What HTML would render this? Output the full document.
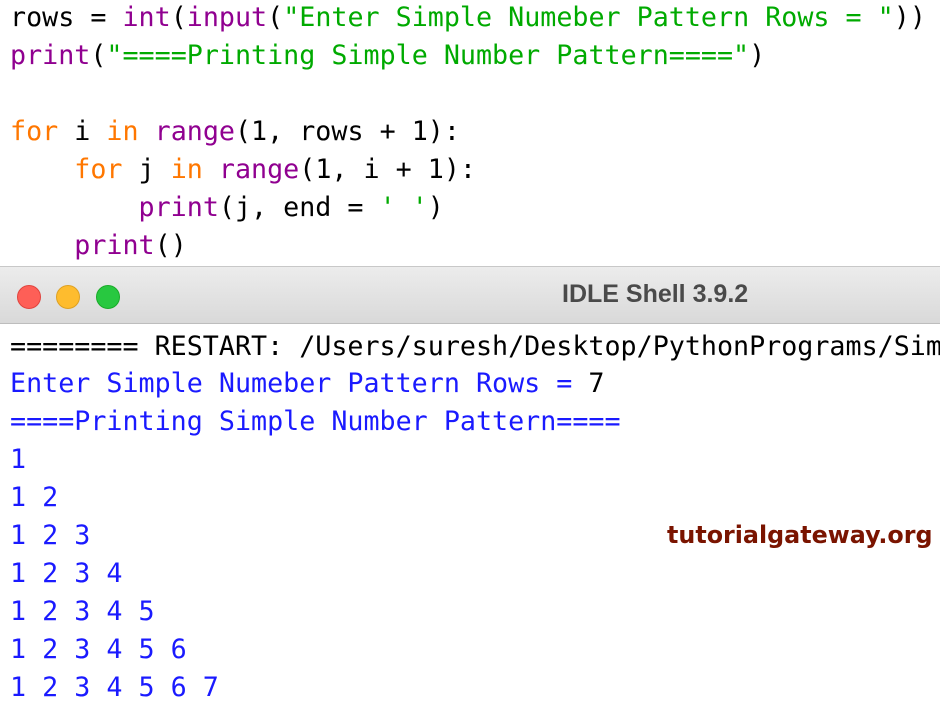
<!DOCTYPE html>
<html><head><meta charset="utf-8"><style>
body{margin:0;width:940px;height:707px;overflow:hidden;background:#fff;position:relative;font-family:"DejaVu Sans Mono","Liberation Mono",monospace;font-size:26.7px;}
.l{position:absolute;left:10px;white-space:pre;line-height:38px;height:38px;}
.k{color:#ff7700}.b{color:#900090}.s{color:#00aa00}.o{color:#1a1aff}
#bar{position:absolute;left:0;top:266px;width:940px;height:56px;background:linear-gradient(#ececec,#d9d9d9);border-top:1px solid #c8c8c8;border-bottom:1px solid #bdbdbd;}
.c{position:absolute;top:18px;width:22px;height:22px;border-radius:50%;}
#t{position:absolute;left:562px;top:13px;font-family:"Liberation Sans",sans-serif;font-weight:bold;font-size:25px;color:#4a4a4a;}
#w{position:absolute;left:667px;top:521px;font-family:"DejaVu Sans","Liberation Sans",sans-serif;font-weight:bold;font-size:23.8px;color:#7a1400;}
</style></head><body>
<div class="l" style="top:-1px">rows = <span class="b">int</span>(<span class="b">input</span>(<span class="s">"Enter Simple Numeber Pattern Rows = "</span>))</div>
<div class="l" style="top:37px"><span class="b">print</span>(<span class="s">"====Printing Simple Number Pattern===="</span>)</div>
<div class="l" style="top:113px"><span class="k">for</span> i <span class="k">in</span> <span class="b">range</span>(1, rows + 1):</div>
<div class="l" style="top:151px">    <span class="k">for</span> j <span class="k">in</span> <span class="b">range</span>(1, i + 1):</div>
<div class="l" style="top:189px">        <span class="b">print</span>(j, end = <span class="s">' '</span>)</div>
<div class="l" style="top:227px">    <span class="b">print</span>()</div>
<div id="bar">
<div class="c" style="left:17px;background:#fe5f57;border:0.5px solid #e0443e"></div>
<div class="c" style="left:56px;background:#febc2e;border:0.5px solid #dea123"></div>
<div class="c" style="left:96px;background:#28c840;border:0.5px solid #1aab29"></div>
<div id="t">IDLE Shell 3.9.2</div>
</div>
<div class="l" style="top:328px;width:930px;overflow:hidden">======== RESTART: /Users/suresh/Desktop/PythonPrograms/Simple</div>
<div class="l o" style="top:365px">Enter Simple Numeber Pattern Rows = <span style="color:#000">7</span></div>
<div class="l o" style="top:403px">====Printing Simple Number Pattern====</div>
<div class="l o" style="top:441px">1</div>
<div class="l o" style="top:479px">1 2</div>
<div class="l o" style="top:517px">1 2 3</div>
<div class="l o" style="top:555px">1 2 3 4</div>
<div class="l o" style="top:593px">1 2 3 4 5</div>
<div class="l o" style="top:631px">1 2 3 4 5 6</div>
<div class="l o" style="top:669px">1 2 3 4 5 6 7</div>
<div id="w">tutorialgateway.org</div>
</body></html>
